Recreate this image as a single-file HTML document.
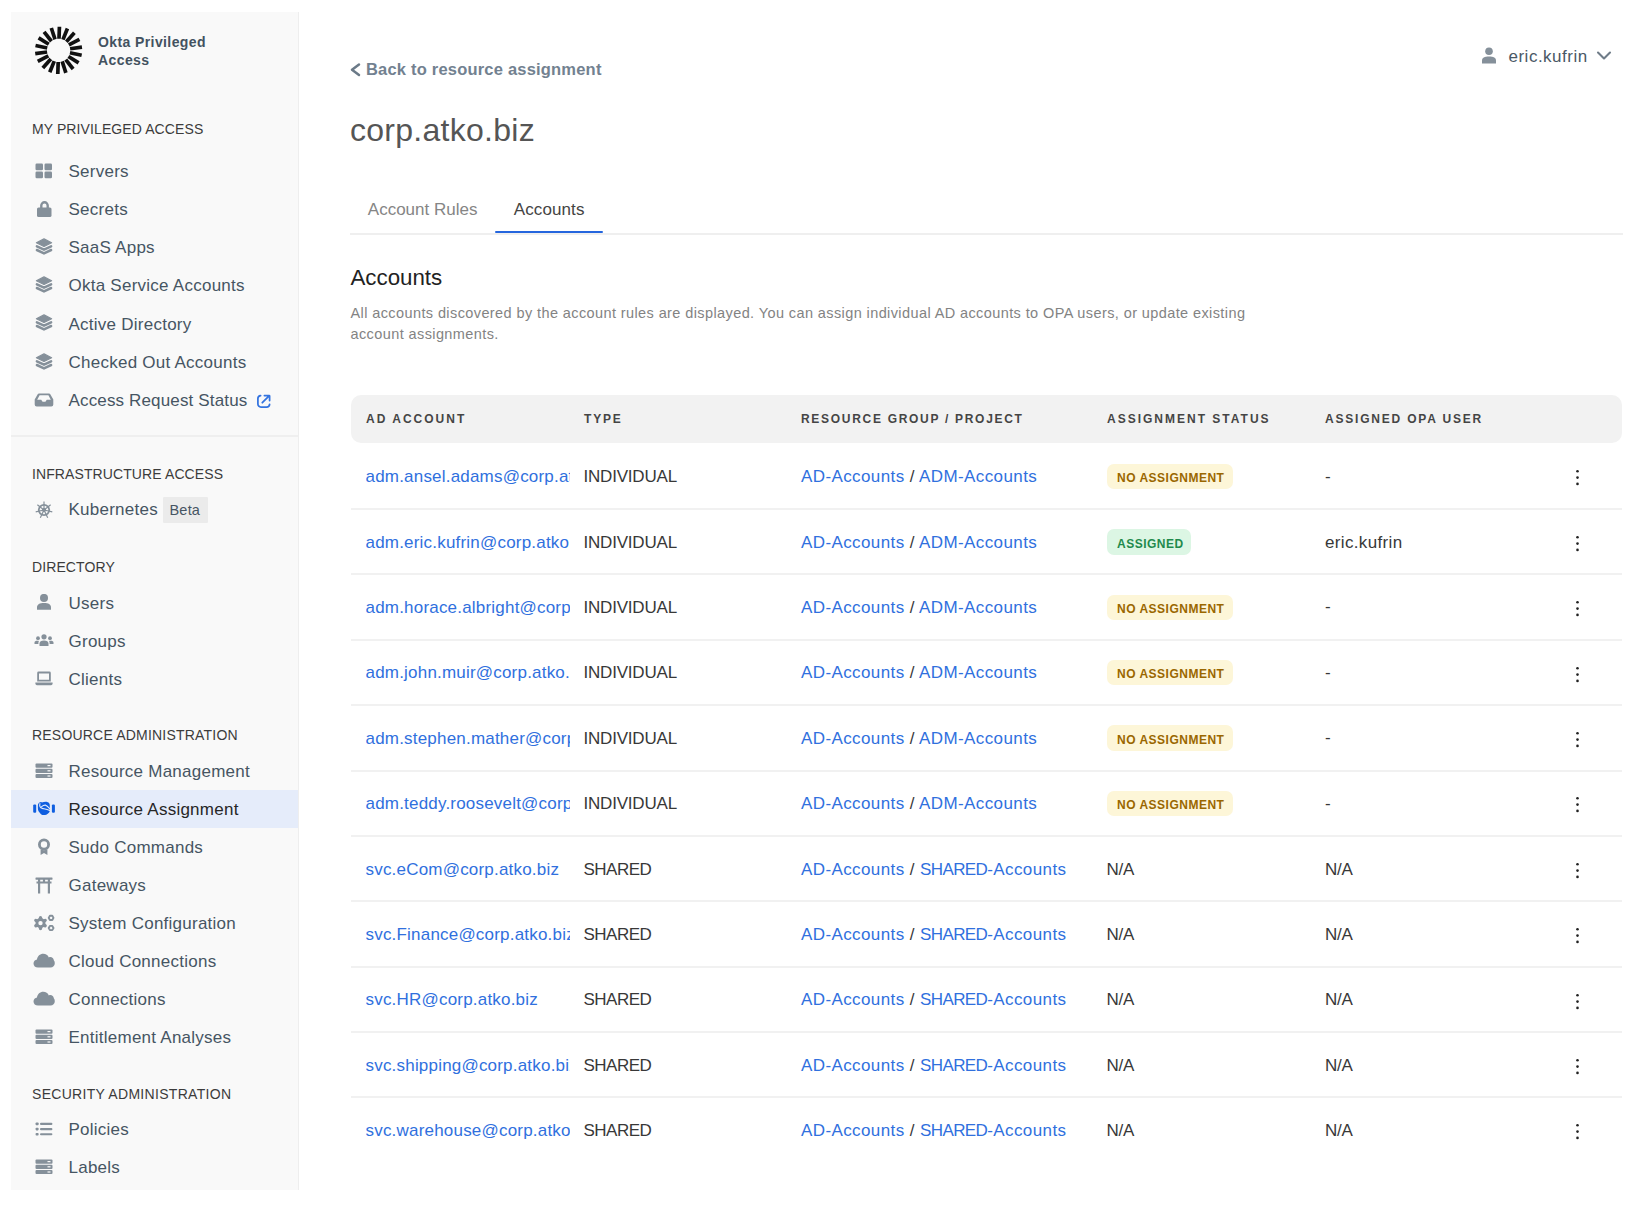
<!DOCTYPE html>
<html><head><meta charset="utf-8"><style>
html,body{margin:0;padding:0;background:#fff;width:1640px;height:1212px;overflow:hidden;position:relative}
body{font-family:"Liberation Sans",sans-serif}
.t{position:absolute;white-space:nowrap}
.r{position:absolute;display:block}
</style></head><body>
<div class="r" style="left:11px;top:12px;width:287px;height:1178px;background:#f9f9f9;"></div>
<div class="r" style="left:298px;top:12px;width:1px;height:1178px;background:#eeeeee;"></div>
<svg class="r" style="left:0;top:0" width="120" height="100"><g stroke="#111" stroke-width="3.7" stroke-linecap="butt"><line x1="59.00" y1="38.81" x2="59.42" y2="26.81"/><line x1="62.95" y1="39.64" x2="67.44" y2="28.52"/><line x1="66.36" y1="41.78" x2="74.39" y2="32.86"/><line x1="68.84" y1="44.95" x2="79.44" y2="39.32"/><line x1="70.09" y1="48.79" x2="81.97" y2="47.12"/><line x1="69.95" y1="52.81" x2="81.68" y2="55.31"/><line x1="68.44" y1="56.55" x2="78.61" y2="62.91"/><line x1="65.74" y1="59.54" x2="73.13" y2="69.00"/><line x1="62.18" y1="61.43" x2="65.89" y2="72.84"/><line x1="58.20" y1="61.99" x2="57.78" y2="73.99"/><line x1="54.25" y1="61.16" x2="49.76" y2="72.28"/><line x1="50.84" y1="59.02" x2="42.81" y2="67.94"/><line x1="48.36" y1="55.85" x2="37.76" y2="61.48"/><line x1="47.11" y1="52.01" x2="35.23" y2="53.68"/><line x1="47.25" y1="47.99" x2="35.52" y2="45.49"/><line x1="48.76" y1="44.25" x2="38.59" y2="37.89"/><line x1="51.46" y1="41.26" x2="44.07" y2="31.80"/><line x1="55.02" y1="39.37" x2="51.31" y2="27.96"/></g></svg>
<div class="t" style="left:98px;top:34.95px;font-size:14px;line-height:14px;color:#435260;font-weight:700;letter-spacing:0.4px;">Okta Privileged</div>
<div class="t" style="left:98px;top:52.65px;font-size:14px;line-height:14px;color:#435260;font-weight:700;letter-spacing:0.4px;">Access</div>
<div class="t" style="left:32px;top:121.55px;font-size:14px;line-height:14px;color:#3c3c3c;font-weight:400;letter-spacing:0.1px;">MY PRIVILEGED ACCESS</div>
<div class="t" style="left:68.5px;top:162.91px;font-size:17px;line-height:17px;color:#465563;font-weight:400;letter-spacing:0.25px;">Servers</div>
<svg class="r" style="left:35px;top:163.0px;" width="18" height="16" viewBox="0 0 18 16"><g fill="#85909a"><rect x="0.5" y="0.5" width="7.5" height="6.8" rx="1.2"/><rect x="9.5" y="0.5" width="7.5" height="6.8" rx="1.2"/><rect x="0.5" y="8.5" width="7.5" height="6.8" rx="1.2"/><rect x="9.5" y="8.5" width="7.5" height="6.8" rx="1.2"/></g></svg>
<div class="t" style="left:68.5px;top:201.06px;font-size:17px;line-height:17px;color:#465563;font-weight:400;letter-spacing:0.25px;">Secrets</div>
<svg class="r" style="left:35px;top:199.95000000000002px;" width="18" height="18" viewBox="0 0 18 18"><path d="M6.3 8 V5.5 a3.2 3.2 0 0 1 6.4 0 V8" fill="none" stroke="#85909a" stroke-width="2.4"/><rect x="2" y="7.5" width="14.5" height="9.5" rx="1.6" fill="#85909a"/></svg>
<div class="t" style="left:68.5px;top:239.21px;font-size:17px;line-height:17px;color:#465563;font-weight:400;letter-spacing:0.25px;">SaaS Apps</div>
<svg class="r" style="left:35px;top:238.10000000000002px;" width="18" height="18" viewBox="0 0 18 18"><g fill="#85909a" stroke="#85909a" stroke-linejoin="round"><path d="M9 0.9 L16.6 4.7 L9 8.5 L1.4 4.7 Z" stroke-width="1.2"/></g><g fill="none" stroke="#85909a" stroke-width="2.5" stroke-linejoin="round" stroke-linecap="round"><path d="M1.9 8.3 L9 11.7 L16.1 8.3"/><path d="M1.9 12 L9 15.4 L16.1 12"/></g></svg>
<div class="t" style="left:68.5px;top:277.36px;font-size:17px;line-height:17px;color:#465563;font-weight:400;letter-spacing:0.25px;">Okta Service Accounts</div>
<svg class="r" style="left:35px;top:276.25px;" width="18" height="18" viewBox="0 0 18 18"><g fill="#85909a" stroke="#85909a" stroke-linejoin="round"><path d="M9 0.9 L16.6 4.7 L9 8.5 L1.4 4.7 Z" stroke-width="1.2"/></g><g fill="none" stroke="#85909a" stroke-width="2.5" stroke-linejoin="round" stroke-linecap="round"><path d="M1.9 8.3 L9 11.7 L16.1 8.3"/><path d="M1.9 12 L9 15.4 L16.1 12"/></g></svg>
<div class="t" style="left:68.5px;top:315.51px;font-size:17px;line-height:17px;color:#465563;font-weight:400;letter-spacing:0.25px;">Active Directory</div>
<svg class="r" style="left:35px;top:314.4px;" width="18" height="18" viewBox="0 0 18 18"><g fill="#85909a" stroke="#85909a" stroke-linejoin="round"><path d="M9 0.9 L16.6 4.7 L9 8.5 L1.4 4.7 Z" stroke-width="1.2"/></g><g fill="none" stroke="#85909a" stroke-width="2.5" stroke-linejoin="round" stroke-linecap="round"><path d="M1.9 8.3 L9 11.7 L16.1 8.3"/><path d="M1.9 12 L9 15.4 L16.1 12"/></g></svg>
<div class="t" style="left:68.5px;top:353.66px;font-size:17px;line-height:17px;color:#465563;font-weight:400;letter-spacing:0.25px;">Checked Out Accounts</div>
<svg class="r" style="left:35px;top:352.55px;" width="18" height="18" viewBox="0 0 18 18"><g fill="#85909a" stroke="#85909a" stroke-linejoin="round"><path d="M9 0.9 L16.6 4.7 L9 8.5 L1.4 4.7 Z" stroke-width="1.2"/></g><g fill="none" stroke="#85909a" stroke-width="2.5" stroke-linejoin="round" stroke-linecap="round"><path d="M1.9 8.3 L9 11.7 L16.1 8.3"/><path d="M1.9 12 L9 15.4 L16.1 12"/></g></svg>
<div class="t" style="left:68.5px;top:391.81px;font-size:17px;line-height:17px;color:#465563;font-weight:400;letter-spacing:0.15px;">Access Request Status</div>
<svg class="r" style="left:34px;top:392.7px;" width="20" height="15" viewBox="0 0 20 15"><path d="M5 0.5 H15 a1.5 1.5 0 0 1 1.3 .8 L19.3 6.5 V11.5 a2 2 0 0 1 -2 2 H2.7 a2 2 0 0 1 -2 -2 V6.5 L3.7 1.3 A1.5 1.5 0 0 1 5 0.5 Z M5.6 2.3 L3.2 6.8 H7.2 L8.6 8.8 H11.4 L12.8 6.8 H16.8 L14.4 2.3 Z" fill="#85909a" fill-rule="evenodd"/></svg>
<svg class="r" style="left:255px;top:393px;" width="17" height="17" viewBox="0 0 17 17"><g fill="none" stroke="#3474e0" stroke-width="1.75" stroke-linecap="round" stroke-linejoin="round"><path d="M5.6 2.6 A3 3 0 0 0 2.9 5.6 V11 A3 3 0 0 0 5.9 14 H11.6 A3 3 0 0 0 14.6 11.3"/><path d="M7.3 9.7 L13.6 3.3 M9.4 2.6 H14.1 A0.5 0.5 0 0 1 14.6 3.1 V7.6"/></g></svg>
<div class="r" style="left:11px;top:435px;width:287px;height:2px;background:#efefef;"></div>
<div class="t" style="left:32px;top:466.95px;font-size:14px;line-height:14px;color:#3c3c3c;font-weight:400;letter-spacing:0.1px;">INFRASTRUCTURE ACCESS</div>
<div class="t" style="left:68.5px;top:501.31px;font-size:17px;line-height:17px;color:#465563;font-weight:400;letter-spacing:0.25px;">Kubernetes</div>
<svg class="r" style="left:35px;top:500.70000000000005px;" width="18" height="18" viewBox="0 0 18 18"><g stroke="#85909a" fill="none"><circle cx="9" cy="9" r="5.2" stroke-width="1.8"/><g stroke-width="1.2"><line x1="9" y1="9" x2="9.00" y2="0.50"/><line x1="9" y1="9" x2="15.65" y2="3.70"/><line x1="9" y1="9" x2="17.29" y2="10.89"/><line x1="9" y1="9" x2="12.69" y2="16.66"/><line x1="9" y1="9" x2="5.31" y2="16.66"/><line x1="9" y1="9" x2="0.71" y2="10.89"/><line x1="9" y1="9" x2="2.35" y2="3.70"/></g><circle cx="9" cy="9" r="1.6" fill="#85909a"/></g></svg>
<div class="r" style="left:162.7px;top:497.4px;width:45px;height:25.6px;background:#ebebeb;border-radius:1px"></div>
<div class="t" style="left:169.5px;top:503.43px;font-size:14.5px;line-height:14.5px;color:#465563;font-weight:400;letter-spacing:0.2px;">Beta</div>
<div class="t" style="left:32px;top:560.45px;font-size:14px;line-height:14px;color:#3c3c3c;font-weight:400;letter-spacing:0.1px;">DIRECTORY</div>
<div class="t" style="left:68.5px;top:594.51px;font-size:17px;line-height:17px;color:#465563;font-weight:400;letter-spacing:0.25px;">Users</div>
<svg class="r" style="left:35px;top:594.4px;" width="18" height="17" viewBox="0 0 18 17"><g fill="#85909a"><circle cx="9" cy="3.9" r="4"/><path d="M2 15.8 V13.2 C2 10.4 4.6 8.9 9 8.9 C13.4 8.9 16 10.4 16 13.2 V15.8 Z"/></g></svg>
<div class="t" style="left:68.5px;top:632.51px;font-size:17px;line-height:17px;color:#465563;font-weight:400;letter-spacing:0.25px;">Groups</div>
<svg class="r" style="left:34px;top:633.9px;" width="20" height="14" viewBox="0 0 20 14"><g fill="#85909a"><circle cx="10" cy="2.8" r="2.6"/><circle cx="4" cy="4.2" r="1.9"/><circle cx="16" cy="4.2" r="1.9"/><path d="M5.5 12 V9.5 C5.5 7.5 7.2 6.4 10 6.4 C12.8 6.4 14.5 7.5 14.5 9.5 V12 Z"/><path d="M0.5 10 V8.6 C0.5 7.4 1.6 6.8 3.4 6.8 C4.4 6.8 4.9 7 4.9 7 C4.6 7.6 4.4 8.2 4.4 9 V10 Z"/><path d="M19.5 10 V8.6 C19.5 7.4 18.4 6.8 16.6 6.8 C15.6 6.8 15.1 7 15.1 7 C15.4 7.6 15.6 8.2 15.6 9 V10 Z"/></g></svg>
<div class="t" style="left:68.5px;top:670.61px;font-size:17px;line-height:17px;color:#465563;font-weight:400;letter-spacing:0.25px;">Clients</div>
<svg class="r" style="left:34px;top:671.0px;" width="20" height="16" viewBox="0 0 20 16"><g fill="#85909a"><path d="M4.6 0.6 H15.4 a1.4 1.4 0 0 1 1.4 1.4 V10.6 H3.2 V2 a1.4 1.4 0 0 1 1.4 -1.4 Z M5 2.4 V8.8 H15 V2.4 Z" fill-rule="evenodd"/><path d="M1.4 11.4 H18.6 V12.6 a1.6 1.6 0 0 1 -1.6 1.6 H3 a1.6 1.6 0 0 1 -1.6 -1.6 Z"/></g></svg>
<div class="t" style="left:32px;top:728.25px;font-size:14px;line-height:14px;color:#3c3c3c;font-weight:400;letter-spacing:0.2px;">RESOURCE ADMINISTRATION</div>
<div class="t" style="left:68.5px;top:762.81px;font-size:17px;line-height:17px;color:#465563;font-weight:400;letter-spacing:0.25px;">Resource Management</div>
<svg class="r" style="left:35px;top:763.2px;" width="18" height="16" viewBox="0 0 18 16"><g fill="#85909a"><rect x="0.5" y="0.5" width="17" height="4.2" rx="1"/><rect x="0.5" y="5.7" width="17" height="4.2" rx="1"/><rect x="0.5" y="10.9" width="17" height="4.2" rx="1"/></g><g fill="#f9f9f9"><rect x="12.5" y="2" width="3" height="1.2"/><rect x="12.5" y="7.2" width="3" height="1.2"/><rect x="12.5" y="12.4" width="3" height="1.2"/></g></svg>
<div class="r" style="left:11px;top:790px;width:287px;height:37.8px;background:#e5ecfa;"></div>
<div class="t" style="left:68.5px;top:800.81px;font-size:17px;line-height:17px;color:#262626;font-weight:400;letter-spacing:0.25px;">Resource Assignment</div>
<svg class="r" style="left:32px;top:800.0px;" width="24" height="17" viewBox="0 0 24 17"><g fill="#0e5ee0"><rect x="1.2" y="4.4" width="3" height="8.4" rx="1.1"/><rect x="19.9" y="4.4" width="3" height="8.4" rx="1.1"/><path d="M5.9 5.4 C5.9 4.4 6.2 3.6 6.9 3.1 C7.6 2.5 8.3 2.1 9.2 2.1 L9.9 2.4 C11.5 1.9 13.5 1.7 15.1 1.9 C16.2 2.1 17 2.7 17.5 3.8 C17.8 4.6 17.8 5.4 17.8 6 L17.8 9.9 C17.8 11 17.6 11.8 17.1 12.5 C16.3 13.6 15.3 14.3 14.3 14.7 C13 15.1 11.6 15.1 10.4 15 C9.1 14.6 7.6 13 6.4 11.1 C6 10.1 5.9 9 5.9 8 Z"/></g><g fill="none" stroke="#e5ecfa" stroke-width="1.1" stroke-linecap="round"><path d="M7.9 3.6 C7.4 5.6 8.4 7.8 10.4 8.4 C12 8.8 14.4 9 17.9 10.4"/><path d="M9.6 6.6 C10.8 5.6 12.2 5 13.4 5.1 C14.8 5.5 16.4 7.2 17.9 8.9"/></g></svg>
<div class="t" style="left:68.5px;top:838.81px;font-size:17px;line-height:17px;color:#465563;font-weight:400;letter-spacing:0.25px;">Sudo Commands</div>
<svg class="r" style="left:35px;top:837.7px;" width="18" height="18" viewBox="0 0 18 18"><g fill="#85909a"><path d="M9 0.5 a6 6 0 1 1 0 12 a6 6 0 1 1 0 -12 Z M9 3.3 a3.2 3.2 0 1 0 0 6.4 a3.2 3.2 0 1 0 0 -6.4 Z" fill-rule="evenodd"/><path d="M5.6 11.2 L5.6 17 L9 15 L12.4 17 L12.4 11.2 C11.4 11.9 10.2 12.2 9 12.2 C7.8 12.2 6.6 11.9 5.6 11.2 Z"/></g></svg>
<div class="t" style="left:68.5px;top:876.91px;font-size:17px;line-height:17px;color:#465563;font-weight:400;letter-spacing:0.25px;">Gateways</div>
<svg class="r" style="left:35px;top:876.8px;" width="18" height="17" viewBox="0 0 18 17"><g fill="#85909a"><rect x="0.5" y="0.5" width="17" height="2.2" rx="0.4"/><rect x="1.5" y="4.5" width="15" height="2"/><rect x="3" y="2" width="2.2" height="14.5"/><rect x="12.8" y="2" width="2.2" height="14.5"/><rect x="7.9" y="2" width="2.2" height="3"/></g></svg>
<div class="t" style="left:68.5px;top:914.91px;font-size:17px;line-height:17px;color:#465563;font-weight:400;letter-spacing:0.25px;">System Configuration</div>
<svg class="r" style="left:33px;top:914.3px;" width="22" height="18" viewBox="0 0 22 18"><g fill="#85909a"><circle cx="7.5" cy="9.1" r="5"/></g><g stroke="#85909a" stroke-width="3.3" stroke-linecap="round"><line x1="7.5" y1="9.1" x2="7.50" y2="3.70"/><line x1="7.5" y1="9.1" x2="12.18" y2="6.40"/><line x1="7.5" y1="9.1" x2="12.18" y2="11.80"/><line x1="7.5" y1="9.1" x2="7.50" y2="14.50"/><line x1="7.5" y1="9.1" x2="2.82" y2="11.80"/><line x1="7.5" y1="9.1" x2="2.82" y2="6.40"/></g><circle cx="7.5" cy="9.1" r="2.2" fill="#f9f9f9"/><g fill="none" stroke="#85909a" stroke-width="1.9" stroke-linejoin="round"><path d="M20.50,3.90 L19.30,5.98 L16.90,5.98 L15.70,3.90 L16.90,1.82 L19.30,1.82 Z"/><path d="M20.50,14.00 L19.30,16.08 L16.90,16.08 L15.70,14.00 L16.90,11.92 L19.30,11.92 Z"/></g></svg>
<div class="t" style="left:68.5px;top:952.91px;font-size:17px;line-height:17px;color:#465563;font-weight:400;letter-spacing:0.25px;">Cloud Connections</div>
<svg class="r" style="left:33px;top:953.3px;" width="22" height="16" viewBox="0 0 22 16"><path d="M5 14.5 C2.3 14.5 0.5 12.7 0.5 10.4 C0.5 8.3 2 6.7 4 6.4 C4.4 3.2 7 0.8 10.3 0.8 C12.8 0.8 14.9 2.2 15.8 4.4 C16.3 4.2 16.8 4.1 17.3 4.1 C19.2 4.1 20.7 5.5 20.8 7.3 C21.5 8 21.8 9 21.8 10.2 C21.8 12.6 19.9 14.5 17.5 14.5 Z" fill="#85909a"/></svg>
<div class="t" style="left:68.5px;top:991.01px;font-size:17px;line-height:17px;color:#465563;font-weight:400;letter-spacing:0.25px;">Connections</div>
<svg class="r" style="left:33px;top:991.4px;" width="22" height="16" viewBox="0 0 22 16"><path d="M5 14.5 C2.3 14.5 0.5 12.7 0.5 10.4 C0.5 8.3 2 6.7 4 6.4 C4.4 3.2 7 0.8 10.3 0.8 C12.8 0.8 14.9 2.2 15.8 4.4 C16.3 4.2 16.8 4.1 17.3 4.1 C19.2 4.1 20.7 5.5 20.8 7.3 C21.5 8 21.8 9 21.8 10.2 C21.8 12.6 19.9 14.5 17.5 14.5 Z" fill="#85909a"/></svg>
<div class="t" style="left:68.5px;top:1029.01px;font-size:17px;line-height:17px;color:#465563;font-weight:400;letter-spacing:0.25px;">Entitlement Analyses</div>
<svg class="r" style="left:35px;top:1029.4px;" width="18" height="16" viewBox="0 0 18 16"><g fill="#85909a"><rect x="0.5" y="0.5" width="17" height="4.2" rx="1"/><rect x="0.5" y="5.7" width="17" height="4.2" rx="1"/><rect x="0.5" y="10.9" width="17" height="4.2" rx="1"/></g><g fill="#f9f9f9"><rect x="12.5" y="2" width="3" height="1.2"/><rect x="12.5" y="7.2" width="3" height="1.2"/><rect x="12.5" y="12.4" width="3" height="1.2"/></g></svg>
<div class="t" style="left:32px;top:1087.05px;font-size:14px;line-height:14px;color:#3c3c3c;font-weight:400;letter-spacing:0.3px;">SECURITY ADMINISTRATION</div>
<div class="t" style="left:68.5px;top:1120.51px;font-size:17px;line-height:17px;color:#465563;font-weight:400;letter-spacing:0.25px;">Policies</div>
<svg class="r" style="left:35px;top:1120.9px;" width="18" height="16" viewBox="0 0 18 16"><g fill="#85909a"><rect x="0.6" y="1.5" width="3" height="2.7" rx="0.8"/><rect x="0.6" y="6.7" width="3" height="2.7" rx="0.8"/><rect x="0.6" y="11.9" width="3" height="2.7" rx="0.8"/><rect x="5" y="1.75" width="12.4" height="2.2" rx="1"/><rect x="5" y="6.95" width="12.4" height="2.2" rx="1"/><rect x="5" y="12.15" width="12.4" height="2.2" rx="1"/></g></svg>
<div class="t" style="left:68.5px;top:1158.91px;font-size:17px;line-height:17px;color:#465563;font-weight:400;letter-spacing:0.25px;">Labels</div>
<svg class="r" style="left:35px;top:1159.3px;" width="18" height="16" viewBox="0 0 18 16"><g fill="#85909a"><rect x="0.5" y="0.5" width="17" height="4.2" rx="1"/><rect x="0.5" y="5.7" width="17" height="4.2" rx="1"/><rect x="0.5" y="10.9" width="17" height="4.2" rx="1"/></g><g fill="#f9f9f9"><rect x="12.5" y="2" width="3" height="1.2"/><rect x="12.5" y="7.2" width="3" height="1.2"/><rect x="12.5" y="12.4" width="3" height="1.2"/></g></svg>
<svg class="r" style="left:1481px;top:46.5px;" width="16" height="17" viewBox="0 0 16 17"><g fill="#85909a"><circle cx="8" cy="4.2" r="3.8"/><path d="M1 16.5 V13.5 C1 10.8 3.5 9.5 8 9.5 C12.5 9.5 15 10.8 15 13.5 V16.5 Z"/></g></svg>
<div class="t" style="left:1508.5px;top:48.01px;font-size:17px;line-height:17px;color:#495866;font-weight:400;letter-spacing:0.5px;">eric.kufrin</div>
<svg class="r" style="left:1596px;top:50px;" width="16" height="12" viewBox="0 0 16 12"><path d="M2 2.5 L8 8.5 L14 2.5" fill="none" stroke="#6f7c88" stroke-width="2.1" stroke-linecap="round" stroke-linejoin="round"/></svg>
<svg class="r" style="left:348px;top:61px;" width="14" height="17" viewBox="0 0 14 17"><path d="M11 3.6 L4 8.8 L11 14" fill="none" stroke="#6b7a88" stroke-width="2.5" stroke-linecap="round" stroke-linejoin="round"/></svg>
<div class="t" style="left:366px;top:61.33px;font-size:16.5px;line-height:16.5px;color:#728190;font-weight:700;letter-spacing:0.2px;">Back to resource assignment</div>
<div class="t" style="left:350px;top:114.21px;font-size:32px;line-height:32px;color:#555;font-weight:400;letter-spacing:0.27px;">corp.atko.biz</div>
<div class="t" style="left:367.8px;top:201.11px;font-size:17px;line-height:17px;color:#858585;font-weight:400;letter-spacing:0px;">Account Rules</div>
<div class="t" style="left:513.8px;top:201.11px;font-size:17px;line-height:17px;color:#444;font-weight:400;letter-spacing:0.1px;">Accounts</div>
<div class="r" style="left:350px;top:233px;width:1273px;height:2px;background:#efefef;"></div>
<div class="r" style="left:495.4px;top:230.7px;width:107.3px;height:2.4px;background:#2566de;border-radius:1.2px"></div>
<div class="t" style="left:350.5px;top:267.12px;font-size:22.3px;line-height:22.3px;color:#222;font-weight:400;letter-spacing:0px;">Accounts</div>
<div class="t" style="left:350.5px;top:305.83px;font-size:14.5px;line-height:14.5px;color:#838383;font-weight:400;letter-spacing:0.4px;">All accounts discovered by the account rules are displayed. You can assign individual AD accounts to OPA users, or update existing</div>
<div class="t" style="left:350.5px;top:327.23px;font-size:14.5px;line-height:14.5px;color:#838383;font-weight:400;letter-spacing:0.4px;">account assignments.</div>
<div class="r" style="left:351px;top:395px;width:1271px;height:48px;background:#f2f2f2;border-radius:10px"></div>
<div class="t" style="left:366px;top:413.04px;font-size:12px;line-height:12px;color:#454545;font-weight:700;letter-spacing:2.0px;">AD ACCOUNT</div>
<div class="t" style="left:584px;top:413.04px;font-size:12px;line-height:12px;color:#454545;font-weight:700;letter-spacing:1.8px;">TYPE</div>
<div class="t" style="left:801px;top:413.04px;font-size:12px;line-height:12px;color:#454545;font-weight:700;letter-spacing:1.7px;">RESOURCE GROUP / PROJECT</div>
<div class="t" style="left:1107px;top:413.04px;font-size:12px;line-height:12px;color:#454545;font-weight:700;letter-spacing:2.0px;">ASSIGNMENT STATUS</div>
<div class="t" style="left:1325px;top:413.04px;font-size:12px;line-height:12px;color:#454545;font-weight:700;letter-spacing:1.8px;">ASSIGNED OPA USER</div>
<div class="t" style="left:365.5px;top:468.11px;font-size:17px;line-height:17px;color:#3070de;font-weight:400;letter-spacing:0.2px;width:204px;overflow:hidden;white-space:nowrap">adm.ansel.adams@corp.atko.biz</div>
<div class="t" style="left:583.5px;top:468.11px;font-size:17px;line-height:17px;color:#383838;font-weight:400;letter-spacing:-0.2px;">INDIVIDUAL</div>
<div class="t" style="left:801px;top:468.11px;font-size:17px;line-height:17px;color:#383838;font-weight:400;letter-spacing:0.4px;"><span style="color:#3070de">AD-Accounts</span> / <span style="color:#3070de">ADM-Accounts</span></div>
<div class="r" style="left:1106.7px;top:463.7px;width:126.6px;height:25.6px;background:#fdf6d8;border-radius:7px"></div>
<div class="t" style="left:1117px;top:472.14px;font-size:12px;line-height:12px;color:#9a6700;font-weight:700;letter-spacing:0.5px;">NO ASSIGNMENT</div>
<div class="t" style="left:1325px;top:467.61px;font-size:17px;line-height:17px;color:#383838;font-weight:400;letter-spacing:0px;">-</div>
<svg class="r" style="left:1574.5px;top:469.3px;" width="5" height="17" viewBox="0 0 5 17"><g fill="#222"><circle cx="2.5" cy="2.3" r="1.3"/><circle cx="2.5" cy="8.6" r="1.3"/><circle cx="2.5" cy="14.9" r="1.3"/></g></svg>
<div class="r" style="left:351px;top:508px;width:1271px;height:2px;background:#f1f1f1;"></div>
<div class="t" style="left:365.5px;top:533.51px;font-size:17px;line-height:17px;color:#3070de;font-weight:400;letter-spacing:0.2px;width:204px;overflow:hidden;white-space:nowrap">adm.eric.kufrin@corp.atko.biz</div>
<div class="t" style="left:583.5px;top:533.51px;font-size:17px;line-height:17px;color:#383838;font-weight:400;letter-spacing:-0.2px;">INDIVIDUAL</div>
<div class="t" style="left:801px;top:533.51px;font-size:17px;line-height:17px;color:#383838;font-weight:400;letter-spacing:0.4px;"><span style="color:#3070de">AD-Accounts</span> / <span style="color:#3070de">ADM-Accounts</span></div>
<div class="r" style="left:1106.7px;top:529.1px;width:84.4px;height:25.6px;background:#dcf6e4;border-radius:7px"></div>
<div class="t" style="left:1117px;top:537.54px;font-size:12px;line-height:12px;color:#1f8a4c;font-weight:700;letter-spacing:0.5px;">ASSIGNED</div>
<div class="t" style="left:1325px;top:533.51px;font-size:17px;line-height:17px;color:#383838;font-weight:400;letter-spacing:0.35px;">eric.kufrin</div>
<svg class="r" style="left:1574.5px;top:534.6999999999999px;" width="5" height="17" viewBox="0 0 5 17"><g fill="#222"><circle cx="2.5" cy="2.3" r="1.3"/><circle cx="2.5" cy="8.6" r="1.3"/><circle cx="2.5" cy="14.9" r="1.3"/></g></svg>
<div class="r" style="left:351px;top:573px;width:1271px;height:2px;background:#f1f1f1;"></div>
<div class="t" style="left:365.5px;top:598.91px;font-size:17px;line-height:17px;color:#3070de;font-weight:400;letter-spacing:0.2px;width:204px;overflow:hidden;white-space:nowrap">adm.horace.albright@corp.atko.biz</div>
<div class="t" style="left:583.5px;top:598.91px;font-size:17px;line-height:17px;color:#383838;font-weight:400;letter-spacing:-0.2px;">INDIVIDUAL</div>
<div class="t" style="left:801px;top:598.91px;font-size:17px;line-height:17px;color:#383838;font-weight:400;letter-spacing:0.4px;"><span style="color:#3070de">AD-Accounts</span> / <span style="color:#3070de">ADM-Accounts</span></div>
<div class="r" style="left:1106.7px;top:594.5px;width:126.6px;height:25.6px;background:#fdf6d8;border-radius:7px"></div>
<div class="t" style="left:1117px;top:602.94px;font-size:12px;line-height:12px;color:#9a6700;font-weight:700;letter-spacing:0.5px;">NO ASSIGNMENT</div>
<div class="t" style="left:1325px;top:598.41px;font-size:17px;line-height:17px;color:#383838;font-weight:400;letter-spacing:0px;">-</div>
<svg class="r" style="left:1574.5px;top:600.0999999999999px;" width="5" height="17" viewBox="0 0 5 17"><g fill="#222"><circle cx="2.5" cy="2.3" r="1.3"/><circle cx="2.5" cy="8.6" r="1.3"/><circle cx="2.5" cy="14.9" r="1.3"/></g></svg>
<div class="r" style="left:351px;top:639px;width:1271px;height:2px;background:#f1f1f1;"></div>
<div class="t" style="left:365.5px;top:664.31px;font-size:17px;line-height:17px;color:#3070de;font-weight:400;letter-spacing:0.2px;width:204px;overflow:hidden;white-space:nowrap">adm.john.muir@corp.atko.biz</div>
<div class="t" style="left:583.5px;top:664.31px;font-size:17px;line-height:17px;color:#383838;font-weight:400;letter-spacing:-0.2px;">INDIVIDUAL</div>
<div class="t" style="left:801px;top:664.31px;font-size:17px;line-height:17px;color:#383838;font-weight:400;letter-spacing:0.4px;"><span style="color:#3070de">AD-Accounts</span> / <span style="color:#3070de">ADM-Accounts</span></div>
<div class="r" style="left:1106.7px;top:659.9000000000001px;width:126.6px;height:25.6px;background:#fdf6d8;border-radius:7px"></div>
<div class="t" style="left:1117px;top:668.34px;font-size:12px;line-height:12px;color:#9a6700;font-weight:700;letter-spacing:0.5px;">NO ASSIGNMENT</div>
<div class="t" style="left:1325px;top:663.81px;font-size:17px;line-height:17px;color:#383838;font-weight:400;letter-spacing:0px;">-</div>
<svg class="r" style="left:1574.5px;top:665.5px;" width="5" height="17" viewBox="0 0 5 17"><g fill="#222"><circle cx="2.5" cy="2.3" r="1.3"/><circle cx="2.5" cy="8.6" r="1.3"/><circle cx="2.5" cy="14.9" r="1.3"/></g></svg>
<div class="r" style="left:351px;top:704px;width:1271px;height:2px;background:#f1f1f1;"></div>
<div class="t" style="left:365.5px;top:729.71px;font-size:17px;line-height:17px;color:#3070de;font-weight:400;letter-spacing:0.2px;width:204px;overflow:hidden;white-space:nowrap">adm.stephen.mather@corp.atko.biz</div>
<div class="t" style="left:583.5px;top:729.71px;font-size:17px;line-height:17px;color:#383838;font-weight:400;letter-spacing:-0.2px;">INDIVIDUAL</div>
<div class="t" style="left:801px;top:729.71px;font-size:17px;line-height:17px;color:#383838;font-weight:400;letter-spacing:0.4px;"><span style="color:#3070de">AD-Accounts</span> / <span style="color:#3070de">ADM-Accounts</span></div>
<div class="r" style="left:1106.7px;top:725.3000000000001px;width:126.6px;height:25.6px;background:#fdf6d8;border-radius:7px"></div>
<div class="t" style="left:1117px;top:733.74px;font-size:12px;line-height:12px;color:#9a6700;font-weight:700;letter-spacing:0.5px;">NO ASSIGNMENT</div>
<div class="t" style="left:1325px;top:729.21px;font-size:17px;line-height:17px;color:#383838;font-weight:400;letter-spacing:0px;">-</div>
<svg class="r" style="left:1574.5px;top:730.9px;" width="5" height="17" viewBox="0 0 5 17"><g fill="#222"><circle cx="2.5" cy="2.3" r="1.3"/><circle cx="2.5" cy="8.6" r="1.3"/><circle cx="2.5" cy="14.9" r="1.3"/></g></svg>
<div class="r" style="left:351px;top:770px;width:1271px;height:2px;background:#f1f1f1;"></div>
<div class="t" style="left:365.5px;top:795.11px;font-size:17px;line-height:17px;color:#3070de;font-weight:400;letter-spacing:0.2px;width:204px;overflow:hidden;white-space:nowrap">adm.teddy.roosevelt@corp.atko.biz</div>
<div class="t" style="left:583.5px;top:795.11px;font-size:17px;line-height:17px;color:#383838;font-weight:400;letter-spacing:-0.2px;">INDIVIDUAL</div>
<div class="t" style="left:801px;top:795.11px;font-size:17px;line-height:17px;color:#383838;font-weight:400;letter-spacing:0.4px;"><span style="color:#3070de">AD-Accounts</span> / <span style="color:#3070de">ADM-Accounts</span></div>
<div class="r" style="left:1106.7px;top:790.7px;width:126.6px;height:25.6px;background:#fdf6d8;border-radius:7px"></div>
<div class="t" style="left:1117px;top:799.14px;font-size:12px;line-height:12px;color:#9a6700;font-weight:700;letter-spacing:0.5px;">NO ASSIGNMENT</div>
<div class="t" style="left:1325px;top:794.61px;font-size:17px;line-height:17px;color:#383838;font-weight:400;letter-spacing:0px;">-</div>
<svg class="r" style="left:1574.5px;top:796.3px;" width="5" height="17" viewBox="0 0 5 17"><g fill="#222"><circle cx="2.5" cy="2.3" r="1.3"/><circle cx="2.5" cy="8.6" r="1.3"/><circle cx="2.5" cy="14.9" r="1.3"/></g></svg>
<div class="r" style="left:351px;top:835px;width:1271px;height:2px;background:#f1f1f1;"></div>
<div class="t" style="left:365.5px;top:860.51px;font-size:17px;line-height:17px;color:#3070de;font-weight:400;letter-spacing:0.2px;width:204px;overflow:hidden;white-space:nowrap">svc.eCom@corp.atko.biz</div>
<div class="t" style="left:583.5px;top:860.51px;font-size:17px;line-height:17px;color:#383838;font-weight:400;letter-spacing:-0.5px;">SHARED</div>
<div class="t" style="left:801px;top:860.51px;font-size:17px;line-height:17px;color:#383838;font-weight:400;letter-spacing:0.4px;"><span style="color:#3070de">AD-Accounts</span> / <span style="color:#3070de"><span style="letter-spacing:-0.6px">SHARED</span>-Accounts</span></div>
<div class="t" style="left:1106.5px;top:860.51px;font-size:17px;line-height:17px;color:#383838;font-weight:400;letter-spacing:-0.3px;">N/A</div>
<div class="t" style="left:1325px;top:860.51px;font-size:17px;line-height:17px;color:#383838;font-weight:400;letter-spacing:-0.3px;">N/A</div>
<svg class="r" style="left:1574.5px;top:861.7px;" width="5" height="17" viewBox="0 0 5 17"><g fill="#222"><circle cx="2.5" cy="2.3" r="1.3"/><circle cx="2.5" cy="8.6" r="1.3"/><circle cx="2.5" cy="14.9" r="1.3"/></g></svg>
<div class="r" style="left:351px;top:900px;width:1271px;height:2px;background:#f1f1f1;"></div>
<div class="t" style="left:365.5px;top:925.91px;font-size:17px;line-height:17px;color:#3070de;font-weight:400;letter-spacing:0.2px;width:204px;overflow:hidden;white-space:nowrap">svc.Finance@corp.atko.biz</div>
<div class="t" style="left:583.5px;top:925.91px;font-size:17px;line-height:17px;color:#383838;font-weight:400;letter-spacing:-0.5px;">SHARED</div>
<div class="t" style="left:801px;top:925.91px;font-size:17px;line-height:17px;color:#383838;font-weight:400;letter-spacing:0.4px;"><span style="color:#3070de">AD-Accounts</span> / <span style="color:#3070de"><span style="letter-spacing:-0.6px">SHARED</span>-Accounts</span></div>
<div class="t" style="left:1106.5px;top:925.91px;font-size:17px;line-height:17px;color:#383838;font-weight:400;letter-spacing:-0.3px;">N/A</div>
<div class="t" style="left:1325px;top:925.91px;font-size:17px;line-height:17px;color:#383838;font-weight:400;letter-spacing:-0.3px;">N/A</div>
<svg class="r" style="left:1574.5px;top:927.1px;" width="5" height="17" viewBox="0 0 5 17"><g fill="#222"><circle cx="2.5" cy="2.3" r="1.3"/><circle cx="2.5" cy="8.6" r="1.3"/><circle cx="2.5" cy="14.9" r="1.3"/></g></svg>
<div class="r" style="left:351px;top:966px;width:1271px;height:2px;background:#f1f1f1;"></div>
<div class="t" style="left:365.5px;top:991.31px;font-size:17px;line-height:17px;color:#3070de;font-weight:400;letter-spacing:0.2px;width:204px;overflow:hidden;white-space:nowrap">svc.HR@corp.atko.biz</div>
<div class="t" style="left:583.5px;top:991.31px;font-size:17px;line-height:17px;color:#383838;font-weight:400;letter-spacing:-0.5px;">SHARED</div>
<div class="t" style="left:801px;top:991.31px;font-size:17px;line-height:17px;color:#383838;font-weight:400;letter-spacing:0.4px;"><span style="color:#3070de">AD-Accounts</span> / <span style="color:#3070de"><span style="letter-spacing:-0.6px">SHARED</span>-Accounts</span></div>
<div class="t" style="left:1106.5px;top:991.31px;font-size:17px;line-height:17px;color:#383838;font-weight:400;letter-spacing:-0.3px;">N/A</div>
<div class="t" style="left:1325px;top:991.31px;font-size:17px;line-height:17px;color:#383838;font-weight:400;letter-spacing:-0.3px;">N/A</div>
<svg class="r" style="left:1574.5px;top:992.5px;" width="5" height="17" viewBox="0 0 5 17"><g fill="#222"><circle cx="2.5" cy="2.3" r="1.3"/><circle cx="2.5" cy="8.6" r="1.3"/><circle cx="2.5" cy="14.9" r="1.3"/></g></svg>
<div class="r" style="left:351px;top:1031px;width:1271px;height:2px;background:#f1f1f1;"></div>
<div class="t" style="left:365.5px;top:1056.71px;font-size:17px;line-height:17px;color:#3070de;font-weight:400;letter-spacing:0.2px;width:204px;overflow:hidden;white-space:nowrap">svc.shipping@corp.atko.biz</div>
<div class="t" style="left:583.5px;top:1056.71px;font-size:17px;line-height:17px;color:#383838;font-weight:400;letter-spacing:-0.5px;">SHARED</div>
<div class="t" style="left:801px;top:1056.71px;font-size:17px;line-height:17px;color:#383838;font-weight:400;letter-spacing:0.4px;"><span style="color:#3070de">AD-Accounts</span> / <span style="color:#3070de"><span style="letter-spacing:-0.6px">SHARED</span>-Accounts</span></div>
<div class="t" style="left:1106.5px;top:1056.71px;font-size:17px;line-height:17px;color:#383838;font-weight:400;letter-spacing:-0.3px;">N/A</div>
<div class="t" style="left:1325px;top:1056.71px;font-size:17px;line-height:17px;color:#383838;font-weight:400;letter-spacing:-0.3px;">N/A</div>
<svg class="r" style="left:1574.5px;top:1057.8999999999999px;" width="5" height="17" viewBox="0 0 5 17"><g fill="#222"><circle cx="2.5" cy="2.3" r="1.3"/><circle cx="2.5" cy="8.6" r="1.3"/><circle cx="2.5" cy="14.9" r="1.3"/></g></svg>
<div class="r" style="left:351px;top:1096px;width:1271px;height:2px;background:#f1f1f1;"></div>
<div class="t" style="left:365.5px;top:1122.11px;font-size:17px;line-height:17px;color:#3070de;font-weight:400;letter-spacing:0.2px;width:204px;overflow:hidden;white-space:nowrap">svc.warehouse@corp.atko.biz</div>
<div class="t" style="left:583.5px;top:1122.11px;font-size:17px;line-height:17px;color:#383838;font-weight:400;letter-spacing:-0.5px;">SHARED</div>
<div class="t" style="left:801px;top:1122.11px;font-size:17px;line-height:17px;color:#383838;font-weight:400;letter-spacing:0.4px;"><span style="color:#3070de">AD-Accounts</span> / <span style="color:#3070de"><span style="letter-spacing:-0.6px">SHARED</span>-Accounts</span></div>
<div class="t" style="left:1106.5px;top:1122.11px;font-size:17px;line-height:17px;color:#383838;font-weight:400;letter-spacing:-0.3px;">N/A</div>
<div class="t" style="left:1325px;top:1122.11px;font-size:17px;line-height:17px;color:#383838;font-weight:400;letter-spacing:-0.3px;">N/A</div>
<svg class="r" style="left:1574.5px;top:1123.3px;" width="5" height="17" viewBox="0 0 5 17"><g fill="#222"><circle cx="2.5" cy="2.3" r="1.3"/><circle cx="2.5" cy="8.6" r="1.3"/><circle cx="2.5" cy="14.9" r="1.3"/></g></svg>
</body></html>
